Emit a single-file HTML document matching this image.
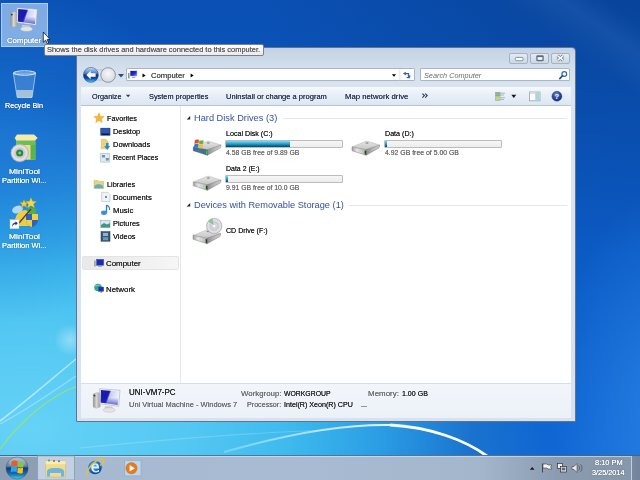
<!DOCTYPE html>
<html><head><meta charset="utf-8">
<style>
*{margin:0;padding:0;box-sizing:border-box}
html,body{width:640px;height:480px;overflow:hidden}
body{position:relative;font-family:"Liberation Sans",sans-serif;background:#0b4aa6}
.a{position:absolute}
.t{position:absolute;white-space:nowrap;line-height:1;transform-origin:0 0}
#desk{left:0;top:0;width:640px;height:480px;
 background:
  radial-gradient(ellipse 190px 170px at 0px 150px, rgba(30,124,214,0.75) 0%, rgba(30,124,214,0) 100%),
  radial-gradient(ellipse 120px 230px at 670px 420px, rgba(50,140,235,0.7) 0%, rgba(50,140,235,0) 100%),
  linear-gradient(215deg, rgba(255,255,255,0) 0px, rgba(255,255,255,0) 20px, rgba(140,190,255,0.09) 45px, rgba(255,255,255,0) 80px),
  radial-gradient(ellipse 520px 330px at 30px 430px, #66d2f6 0%, #54c8f3 30%, #3ebaee 50%, #2a9ce4 68%, #1a72ce 85%, rgba(21,101,200,0) 100%),
  radial-gradient(ellipse 380px 260px at 640px 0px, rgba(0,16,50,0.2) 0%, rgba(0,16,50,0) 100%),
  linear-gradient(to bottom, #0a50b4 0%, #0b5ac4 50%, #1068d6 100%);}
.bar{position:absolute;height:8px;width:118px;border:1px solid #bcbcbc;border-radius:1px;background:linear-gradient(#f6f6f6,#ececec)}
.fill{position:absolute;left:0;top:0;bottom:0;background:linear-gradient(#8ad8ee,#2ab4de 35%,#1a98c4 55%,#0c6288 80%,#0a4c6c)}
</style></head><body>
<div id="desk" class="a"></div>
<svg class="a" style="left:0;top:0" width="640" height="480">
 <defs><filter id="bl" x="-10%" y="-10%" width="120%" height="120%"><feGaussianBlur stdDeviation="0.5"/></filter>
 <linearGradient id="swg" gradientUnits="userSpaceOnUse" x1="224" y1="0" x2="400" y2="0"><stop offset="0" stop-color="#fff" stop-opacity="0.25"/><stop offset="1" stop-color="#fff" stop-opacity="0.95"/></linearGradient>
 <radialGradient id="glow"><stop offset="0" stop-color="#fff" stop-opacity="0.35"/><stop offset="1" stop-color="#fff" stop-opacity="0"/></radialGradient></defs>
 <circle cx="70" cy="340" r="16" fill="url(#glow)"/>
 <g filter="url(#bl)">
 <path d="M0 421 C 30 398, 55 376, 76 359" stroke="rgba(255,255,255,0.5)" stroke-width="1.6" fill="none"/>
 <path d="M0 424 C 30 408, 55 390, 76 376" stroke="rgba(255,255,255,0.32)" stroke-width="1.2" fill="none"/>
 <path d="M0 449 C 20 422, 48 397, 76 386.5" stroke="rgba(150,230,110,0.95)" stroke-width="1.2" fill="none"/>
 <path d="M224 452 C 280 436, 340 424, 390 425 C 430 427, 465 440, 487 456" stroke="url(#swg)" stroke-width="2" fill="none"/>
 <path d="M80 448 C 180 438, 270 432, 330 430" stroke="rgba(255,255,255,0.18)" stroke-width="1.2" fill="none"/>
 <path d="M390 425 C 430 427, 465 440, 487 456" stroke="rgba(255,255,255,0.85)" stroke-width="2.8" fill="none"/>
 </g>
</svg>

<!-- desktop selection -->
<div class="a" style="left:1px;top:3px;width:47px;height:43.5px;background:rgba(182,212,248,0.68);border:1px solid rgba(210,228,252,0.6)"></div>

<!-- window -->
<div class="a" style="left:76px;top:47px;width:500px;height:375px;border:1px solid #62738a;border-radius:4px 4px 0 0;background:linear-gradient(#c3d2e3 0px,#d3dfec 20px,#d9e4f0 40px,#d6e2ef 100%)"></div>
<div class="a" style="left:509px;top:52.5px;width:19px;height:11px;border:1px solid #a4b2c4;border-radius:2px;background:linear-gradient(#e4ebf3,#ccd8e6)"></div>
<div class="a" style="left:530px;top:52.5px;width:19px;height:11px;border:1px solid #a4b2c4;border-radius:2px;background:linear-gradient(#e4ebf3,#ccd8e6)"></div>
<div class="a" style="left:551px;top:52.5px;width:19px;height:11px;border:1px solid #a4b2c4;border-radius:2px;background:linear-gradient(#e4ebf3,#ccd8e6)"></div>
<div class="a" style="left:126px;top:68px;width:289px;height:13px;background:#fff;border:1px solid #a9b6c6;border-radius:1px"></div>
<div class="a" style="left:420px;top:68px;width:150px;height:13px;background:#fff;border:1px solid #a9b6c6;border-radius:1px"></div>
<div class="a" style="left:81px;top:87px;width:490px;height:19px;background:linear-gradient(#f6f9fc,#e7eef7 50%,#dce6f3);border-bottom:1px solid #b8c5d4"></div>
<div class="a" style="left:81px;top:106px;width:490px;height:277px;background:#fff"></div>
<div class="a" style="left:180px;top:106px;width:1px;height:277px;background:#e3e8ee"></div>
<div class="a" style="left:82px;top:256px;width:97px;height:13.5px;border:1px solid #e4e4e4;border-radius:2px;background:linear-gradient(to right,#e9e9e9,#f0f0f0 60%,#f6f6f6)"></div>
<div class="a" style="left:283px;top:118px;width:284px;height:1px;background:#e2e7ee"></div>
<div class="a" style="left:349px;top:205px;width:218px;height:1px;background:#e2e7ee"></div>
<div class="bar" style="left:225px;top:139.5px"><div class="fill" style="width:64px"></div></div>
<div class="bar" style="left:384px;top:139.5px"><div class="fill" style="width:2px"></div></div>
<div class="bar" style="left:225px;top:174.5px"><div class="fill" style="width:2px"></div></div>
<div class="a" style="left:81px;top:383px;width:490px;height:35px;background:linear-gradient(#f2f6fb,#ecf1f8);border-top:1px solid #d5dee9"></div>

<!-- taskbar -->
<div class="a" style="left:0;top:455px;width:640px;height:25px;background:linear-gradient(to right,#8e9fb4 0,#8e9fb4 37px,#a6b9d0 37px,#a8bbd2 300px,#a4b6cc 480px,#8a9bb0 560px,#8697ac 640px);border-top:1px solid rgba(20,60,90,0.55)"></div>
<div class="a" style="left:0;top:456px;width:640px;height:1px;background:rgba(230,238,248,0.55)"></div>
<div class="a" style="left:631px;top:456px;width:9px;height:24px;background:linear-gradient(to right,#c4cfdb 0,#c4cfdb 1px,#7888a0 1px,#73839a)"></div>

<div class="t" style="left:7.26px;top:37.08px;font-size:7.9px;color:#fff;transform:scaleX(0.9849);text-shadow:0 0 0.4px #fff,0 0 1.5px rgba(0,0,0,.45)">Computer</div>
<div class="t" style="left:5.40px;top:102.19px;font-size:7.9px;color:#fff;transform:scaleX(0.9110);text-shadow:0 0 0.4px #fff,0 0 1.5px rgba(0,0,0,.45)">Recycle Bin</div>
<div class="t" style="left:9.16px;top:167.59px;font-size:7.9px;color:#fff;transform:scaleX(1.0712);text-shadow:0 0 0.4px #fff,0 0 1.5px rgba(0,0,0,.45)">MiniTool</div>
<div class="t" style="left:1.98px;top:176.69px;font-size:7.9px;color:#fff;transform:scaleX(0.9462);text-shadow:0 0 0.4px #fff,0 0 1.5px rgba(0,0,0,.45)">Partition Wi...</div>
<div class="t" style="left:9.16px;top:232.59px;font-size:7.9px;color:#fff;transform:scaleX(1.0712);text-shadow:0 0 0.4px #fff,0 0 1.5px rgba(0,0,0,.45)">MiniTool</div>
<div class="t" style="left:1.98px;top:241.69px;font-size:7.9px;color:#fff;transform:scaleX(0.9462);text-shadow:0 0 0.4px #fff,0 0 1.5px rgba(0,0,0,.45)">Partition Wi...</div>
<div class="t" style="left:150.56px;top:71.53px;font-size:7.5px;color:#4a4a4a;transform:scaleX(1.0269);text-shadow:0 0 0.15px #4a4a4a">Computer</div>
<div class="t" style="left:424.49px;top:71.53px;font-size:7.5px;color:#6d6d6d;transform:scaleX(0.9744);font-style:italic">Search Computer</div>
<div class="t" style="left:92.29px;top:93.03px;font-size:7.5px;color:#2a3a52;transform:scaleX(0.9683);text-shadow:0 0 0.15px #2a3a52">Organize</div>
<div class="t" style="left:148.98px;top:93.03px;font-size:7.5px;color:#2a3a52;transform:scaleX(0.9823);text-shadow:0 0 0.15px #2a3a52">System properties</div>
<div class="t" style="left:226.47px;top:93.03px;font-size:7.5px;color:#2a3a52;transform:scaleX(1.0042);text-shadow:0 0 0.15px #2a3a52">Uninstall or change a program</div>
<div class="t" style="left:345.06px;top:93.03px;font-size:7.5px;color:#2a3a52;transform:scaleX(1.0334);text-shadow:0 0 0.15px #2a3a52">Map network drive</div>
<div class="t" style="left:106.59px;top:115.21px;font-size:7.4px;color:#262626;transform:scaleX(0.9875);text-shadow:0 0 0.15px #262626">Favorites</div>
<div class="t" style="left:113.23px;top:128.31px;font-size:7.4px;color:#262626;transform:scaleX(1.0005);text-shadow:0 0 0.15px #262626">Desktop</div>
<div class="t" style="left:113.22px;top:141.46px;font-size:7.4px;color:#262626;transform:scaleX(1.0157);text-shadow:0 0 0.15px #262626">Downloads</div>
<div class="t" style="left:113.26px;top:154.31px;font-size:7.4px;color:#262626;transform:scaleX(0.9483);text-shadow:0 0 0.15px #262626">Recent Places</div>
<div class="t" style="left:106.58px;top:181.01px;font-size:7.4px;color:#262626;transform:scaleX(0.9943);text-shadow:0 0 0.15px #262626">Libraries</div>
<div class="t" style="left:112.96px;top:193.71px;font-size:7.4px;color:#262626;transform:scaleX(1.0355);text-shadow:0 0 0.15px #262626">Documents</div>
<div class="t" style="left:112.95px;top:206.81px;font-size:7.4px;color:#262626;transform:scaleX(1.0584);text-shadow:0 0 0.15px #262626">Music</div>
<div class="t" style="left:112.98px;top:220.01px;font-size:7.4px;color:#262626;transform:scaleX(0.9994);text-shadow:0 0 0.15px #262626">Pictures</div>
<div class="t" style="left:112.98px;top:233.01px;font-size:7.4px;color:#262626;transform:scaleX(1.0055);text-shadow:0 0 0.15px #262626">Videos</div>
<div class="t" style="left:106.45px;top:259.61px;font-size:7.4px;color:#262626;transform:scaleX(1.0708);text-shadow:0 0 0.15px #262626">Computer</div>
<div class="t" style="left:106.44px;top:285.51px;font-size:7.4px;color:#262626;transform:scaleX(1.0716);text-shadow:0 0 0.15px #262626">Network</div>
<div class="t" style="left:194.25px;top:113.69px;font-size:9.3px;color:#3350a0;transform:scaleX(0.9943);text-shadow:none">Hard Disk Drives (3)</div>
<div class="t" style="left:194.35px;top:200.90px;font-size:9.3px;color:#3350a0;transform:scaleX(0.9932);text-shadow:none">Devices with Removable Storage (1)</div>
<div class="t" style="left:225.60px;top:130.31px;font-size:7.4px;color:#262626;transform:scaleX(0.9647);text-shadow:0 0 0.15px #262626">Local Disk (C:)</div>
<div class="t" style="left:225.52px;top:149.46px;font-size:7.4px;color:#6d6d6d;transform:scaleX(0.9246);text-shadow:0 0 0.15px #6d6d6d">4.58 GB free of 9.89 GB</div>
<div class="t" style="left:384.50px;top:130.31px;font-size:7.4px;color:#262626;transform:scaleX(0.9658);text-shadow:0 0 0.15px #262626">Data (D:)</div>
<div class="t" style="left:384.52px;top:149.46px;font-size:7.4px;color:#6d6d6d;transform:scaleX(0.9323);text-shadow:0 0 0.15px #6d6d6d">4.92 GB free of 5.00 GB</div>
<div class="t" style="left:225.61px;top:165.46px;font-size:7.4px;color:#262626;transform:scaleX(0.9413);text-shadow:0 0 0.15px #262626">Data 2 (E:)</div>
<div class="t" style="left:225.52px;top:184.46px;font-size:7.4px;color:#6d6d6d;transform:scaleX(0.9246);text-shadow:0 0 0.15px #6d6d6d">9.91 GB free of 10.0 GB</div>
<div class="t" style="left:225.75px;top:226.71px;font-size:7.4px;color:#262626;transform:scaleX(0.9556);text-shadow:0 0 0.15px #262626">CD Drive (F:)</div>
<div class="t" style="left:129.19px;top:388.93px;font-size:8.2px;color:#262626;transform:scaleX(0.9758);text-shadow:0 0 0.15px #262626">UNI-VM7-PC</div>
<div class="t" style="left:129.22px;top:400.81px;font-size:7.4px;color:#6d6d6d;transform:scaleX(1.0139);text-shadow:0 0 0.15px #6d6d6d">Uni Virtual Machine - Windows 7</div>
<div class="t" style="left:240.75px;top:389.61px;font-size:7.4px;color:#6d6d6d;transform:scaleX(1.0648);text-shadow:0 0 0.15px #6d6d6d">Workgroup:</div>
<div class="t" style="left:283.52px;top:389.61px;font-size:7.4px;color:#262626;transform:scaleX(0.9288);text-shadow:0 0 0.15px #262626">WORKGROUP</div>
<div class="t" style="left:246.70px;top:400.81px;font-size:7.4px;color:#6d6d6d;transform:scaleX(0.9669);text-shadow:0 0 0.15px #6d6d6d">Processor:</div>
<div class="t" style="left:283.50px;top:400.81px;font-size:7.4px;color:#262626;transform:scaleX(0.9634);text-shadow:0 0 0.15px #262626">Intel(R) Xeon(R) CPU</div>
<div class="t" style="left:360.51px;top:400.81px;font-size:7.4px;color:#262626;transform:scaleX(0.9463);text-shadow:0 0 0.15px #262626">...</div>
<div class="t" style="left:368.44px;top:389.61px;font-size:7.4px;color:#6d6d6d;transform:scaleX(1.0767);text-shadow:0 0 0.15px #6d6d6d">Memory:</div>
<div class="t" style="left:401.51px;top:389.61px;font-size:7.4px;color:#262626;transform:scaleX(0.9529);text-shadow:0 0 0.15px #262626">1.00 GB</div>
<div class="t" style="left:594.68px;top:459.14px;font-size:7.6px;color:#fff;transform:scaleX(0.9792);text-shadow:0 0 0.4px #fff,0 0 1.5px rgba(0,0,0,.5)">8:10 PM</div>
<div class="t" style="left:592.29px;top:469.44px;font-size:7.6px;color:#fff;transform:scaleX(0.9609);text-shadow:0 0 0.4px #fff,0 0 1.5px rgba(0,0,0,.5)">3/25/2014</div>


<svg class="a" style="left:0;top:0;z-index:5" width="640" height="480" viewBox="0 0 640 480">
<defs>
 <linearGradient id="scr" x1="0" y1="0" x2="1" y2="0.3">
  <stop offset="0" stop-color="#2020a8"/><stop offset="0.45" stop-color="#1818b0"/><stop offset="0.5" stop-color="#3a40c8"/><stop offset="0.56" stop-color="#c8cef4"/><stop offset="1" stop-color="#eef0fb"/>
 </linearGradient>
 <linearGradient id="scrb" x1="0" y1="0" x2="0" y2="1">
  <stop offset="0.5" stop-color="#3038c0" stop-opacity="0"/><stop offset="1" stop-color="#2028b8" stop-opacity="0.7"/>
 </linearGradient>
 <linearGradient id="tower" x1="0" y1="0" x2="1" y2="0">
  <stop offset="0" stop-color="#8a8a8a"/><stop offset="0.45" stop-color="#d8d8d8"/><stop offset="1" stop-color="#9a9a9a"/>
 </linearGradient>
 
 <radialGradient id="cd" cx="0.5" cy="0.5" r="0.5">
  <stop offset="0" stop-color="#f0f0f0"/><stop offset="0.5" stop-color="#c8c8d0"/><stop offset="0.8" stop-color="#e8e4ec"/><stop offset="1" stop-color="#b8b8c0"/>
 </radialGradient>
 <linearGradient id="back" x1="0" y1="0" x2="0" y2="1">
  <stop offset="0" stop-color="#c4dcf8"/><stop offset="0.4" stop-color="#4a7ccc"/><stop offset="0.5" stop-color="#0c3488"/><stop offset="0.72" stop-color="#0a4aa8"/><stop offset="1" stop-color="#5cc8f8"/>
 </linearGradient>
 <radialGradient id="fwd" cx="0.5" cy="0.4" r="0.6">
  <stop offset="0" stop-color="#f6f7f9"/><stop offset="1" stop-color="#d4d9e0"/>
 </radialGradient>
 <radialGradient id="help" cx="0.45" cy="0.35" r="0.6">
  <stop offset="0" stop-color="#7a9ce4"/><stop offset="0.6" stop-color="#2a48a8"/><stop offset="1" stop-color="#142c80"/>
 </radialGradient>
 <linearGradient id="drvtop" x1="0" y1="0" x2="0" y2="1">
  <stop offset="0" stop-color="#e6e6e6"/><stop offset="1" stop-color="#c4c4c4"/>
 </linearGradient>
 <linearGradient id="drvfront" x1="0" y1="0" x2="1" y2="0">
  <stop offset="0" stop-color="#a0a0a0"/><stop offset="0.35" stop-color="#e4e4e6"/><stop offset="1" stop-color="#b4b4b4"/>
 </linearGradient>
 <linearGradient id="drvright" x1="0" y1="0" x2="1" y2="0">
  <stop offset="0" stop-color="#8a8a8a"/><stop offset="0.5" stop-color="#b8b8b8"/><stop offset="1" stop-color="#d0d0d0"/>
 </linearGradient>
 
 <radialGradient id="orb" cx="0.5" cy="0.6" r="0.6">
  <stop offset="0" stop-color="#60c8f0"/><stop offset="0.45" stop-color="#2a80c0"/><stop offset="0.8" stop-color="#14508a"/><stop offset="1" stop-color="#2a4a68"/>
 </radialGradient>
<linearGradient id="orb2" x1="0" y1="0" x2="0" y2="1">
  <stop offset="0" stop-color="#9fb4c8"/><stop offset="0.42" stop-color="#5f86aa"/><stop offset="0.5" stop-color="#0c3c7c"/><stop offset="0.78" stop-color="#1670b8"/><stop offset="1" stop-color="#3ed0f4"/>
 </linearGradient>
<linearGradient id="scr2" x1="0" y1="0" x2="1" y2="1"><stop offset="0" stop-color="#1010a0"/><stop offset="0.55" stop-color="#2030d0"/><stop offset="1" stop-color="#8090f0"/></linearGradient>
<radialGradient id="ieg" cx="0.4" cy="0.35" r="0.7"><stop offset="0" stop-color="#60b8f0"/><stop offset="0.6" stop-color="#1a6ac8"/><stop offset="1" stop-color="#0a3a90"/></radialGradient>
</defs>

<!-- desktop icons -->
<g>
  <path d="M10.5,13 L14.5,11.5 L17.5,12.3 L17.5,26 L13.5,27.2 L10.5,26 Z" fill="url(#tower)" stroke="#a8a498" stroke-width="0.4"/>
  <circle cx="11.8" cy="14.6" r="0.9" fill="#303030"/>
  <path d="M22,25 L30,25.5 L30,28 L22,27.5 Z" fill="#cfcfcf"/>
  <ellipse cx="26.5" cy="29" rx="6" ry="2.3" fill="#e4e4e4" stroke="#b4b4b4" stroke-width="0.4"/>
  <path d="M17,7.7 L37.3,9.3 L36,25.3 L16.7,22.7 Z" fill="#eef2f6" stroke="#9aa2aa" stroke-width="0.5"/>
  <path d="M18.2,9 L36,10.6 L34.9,24 L17.9,21.6 Z" fill="url(#scr)"/>
  <path d="M18.2,9 L36,10.6 L34.9,24 L17.9,21.6 Z" fill="url(#scrb)"/>
 </g>
<!-- recycle bin -->
<path d="M13.3,73 L35.6,73 L32,97.5 L17.2,97.5 Z" fill="rgba(190,225,255,0.22)" stroke="rgba(225,240,255,0.75)" stroke-width="0.8"/>
<path d="M16.4,90 L32.9,90 L32,97.5 L17.2,97.5 Z" fill="rgba(235,235,220,0.6)"/>
<ellipse cx="24.5" cy="73" rx="11.1" ry="2.2" fill="rgba(255,255,255,0.12)" stroke="rgba(240,250,255,0.9)" stroke-width="1"/>
<!-- minitool 1 -->
<path d="M16.1,140.3 L35.3,140.3 L35.3,159.7 L16.1,159.7 Z" fill="#e8de98"/>
<rect x="16.1" y="141" width="19.2" height="4" fill="#6cc04c"/>
<rect x="30.5" y="145" width="4.8" height="14.7" fill="#5cb444"/>
<path d="M14.7,138 L17,134.6 L34,134.6 L37.7,138 L35.3,140.3 L16.1,140.3 Z" fill="#f4eca8"/>
<circle cx="19.7" cy="153" r="8.9" fill="url(#cd)" stroke="#a8a8b0" stroke-width="0.4"/>
<circle cx="19.7" cy="153" r="3.6" fill="#2a8a3a"/>
<circle cx="19.7" cy="153" r="1.4" fill="#88cc88"/>
<!-- minitool 2 -->
<ellipse cx="17.5" cy="209.5" rx="5.5" ry="3.8" fill="rgba(205,228,255,0.85)" transform="rotate(-20 17.5 209.5)"/>
<path d="M15,222 C15,214 20,210 26,210 L31,214 L30,226 L18,226 Z" fill="#e8cf4a"/>
<path d="M28,207 L36,209 L35,216 L29,216 Z" fill="#52b040"/>
<path d="M26,214 L38,214 L38,220 C38,224 34,227 32,227 C30,227 26,224 26,220 Z" fill="#2f62c0"/>
<path d="M32,214 L38,214 L38,220 L32,220 Z M26,220 L32,220 L32,227 C30,227 26,224 26,220 Z" fill="#f0d040"/>
<path d="M24,199.5 L25.2,202.5 L28.3,202.6 L25.9,204.5 L26.8,207.5 L24,205.8 L21.2,207.5 L22.1,204.5 L19.7,202.6 L22.8,202.5 Z" fill="#f2d030" stroke="#b09020" stroke-width="0.3"/>
<path d="M31,197.5 L32.6,201.3 L36.6,201.5 L33.5,204 L34.6,207.9 L31,205.7 L27.4,207.9 L28.5,204 L25.4,201.5 L29.4,201.3 Z" fill="#f4d840" stroke="#b09020" stroke-width="0.3"/>
<path d="M19,223 L31,209" stroke="#5a3a20" stroke-width="1.3"/>
<rect x="10" y="219.7" width="9" height="9" fill="#fff" stroke="#c8c8c8" stroke-width="0.4"/>
<path d="M12,227 C12,224 13.5,222.5 15.5,222.5 L15.5,221.2 L17.8,223.3 L15.5,225.4 L15.5,224.1 C14.2,224.1 13.2,225 12,227 Z" fill="#1a3a8a"/>

<!-- window: nav buttons -->
<rect x="92" y="70" width="17" height="10" fill="#dde2e8" stroke="#a4aab2" stroke-width="0.6"/>
<circle cx="90.9" cy="74.9" r="7.5" fill="url(#back)" stroke="#27467a" stroke-width="0.5"/>
<path d="M86.3,75 L90.6,70.8 L90.6,73.3 L95.6,73.3 L95.6,76.7 L90.6,76.7 L90.6,79.2 Z" fill="#fff"/>
<circle cx="108.1" cy="75" r="7.3" fill="url(#fwd)" stroke="#7e848c" stroke-width="0.8"/>
<path d="M118,74 L124,74 L121,77.5 Z" fill="#1e4f8f"/>
<!-- address bar contents -->
<rect x="128" y="73" width="1.6" height="5.5" fill="#8a9a8a"/>
<rect x="129.8" y="70.3" width="7.6" height="6.2" fill="#d4dbe2"/>
<rect x="130.4" y="71" width="6.4" height="4.9" fill="url(#scr2)"/>
<rect x="132" y="76.8" width="3.4" height="1.2" fill="#a8b0b0"/>
<path d="M142.5,73.5 L145.6,75.5 L142.5,77.6 Z" fill="#000"/>
<path d="M190.6,73.5 L193.7,75.5 L190.6,77.6 Z" fill="#000"/>
<path d="M391.9,74.3 L396.1,74.3 L394,76.8 Z" fill="#000"/>
<rect x="399.5" y="69" width="0.8" height="11.5" fill="#d4dbe4"/>
<path d="M405.5,73.6 L408.6,73.6 L408.6,76.2" stroke="#2a62b0" stroke-width="1.1" fill="none"/>
<path d="M403,73.6 L405.8,71.8 L405.8,75.4 Z" fill="#2a62b0"/>
<path d="M406.6,77.6 L409.6,77.6" stroke="#2a62b0" stroke-width="1.1" fill="none"/>
<path d="M407.6,75.6 L410.8,75.6 L409.2,78.8 Z" fill="#2a62b0"/>
<!-- search magnifier -->
<circle cx="564.3" cy="74" r="2.4" fill="none" stroke="#2a6cb8" stroke-width="1.2"/>
<path d="M562.5,75.8 L559.8,78.6" stroke="#1a4888" stroke-width="1.6" stroke-linecap="round"/>
<!-- caption glyphs -->
<rect x="515.4" y="57.4" width="7.6" height="3.3" rx="1" fill="#fff" stroke="#5e6c7c" stroke-width="0.7"/>
<rect x="536.3" y="55.2" width="7.4" height="6" rx="1.2" fill="#5e6c7c"/>
<rect x="537.6" y="57.2" width="4.8" height="2.6" fill="#fff"/>
<path d="M557.5,55.6 L563.3,60.4 M563.3,55.6 L557.5,60.4" stroke="#5e6c7c" stroke-width="3"/>
<path d="M557.5,55.6 L563.3,60.4 M563.3,55.6 L557.5,60.4" stroke="#fff" stroke-width="1.5"/>
<!-- toolbar -->
<path d="M126,94.8 L130.2,94.8 L128.1,97.3 Z" fill="#1e395b"/>
<rect x="495.6" y="92.3" width="4.6" height="3.6" fill="#8cb88c" stroke="#7a8a9a" stroke-width="0.4"/>
<rect x="495.6" y="96.8" width="4.6" height="3.6" fill="#c4d470" stroke="#7a8a9a" stroke-width="0.4"/>
<path d="M501,93.2 L505,93.2 M501,95 L504,95 M501,97.7 L505,97.7 M501,99.5 L504,99.5" stroke="#98a8bc" stroke-width="0.8"/>
<path d="M511.3,94.8 L516.3,94.8 L513.8,97.9 Z" fill="#1a1a1a"/>
<rect x="529.4" y="92" width="10.6" height="8.8" fill="#fdfdfd" stroke="#8a98a8" stroke-width="0.7"/>
<rect x="535.2" y="92.4" width="4.4" height="8" fill="#a8d6dc"/>
<rect x="529.8" y="92.4" width="5.4" height="1.6" fill="#d8e0ea"/>
<circle cx="556.9" cy="96.3" r="5" fill="url(#help)" stroke="#30487a" stroke-width="0.4"/>
<text x="556.9" y="99.2" font-family="Liberation Sans" font-size="7.5" font-weight="bold" fill="#fff" text-anchor="middle">?</text>

<!-- nav pane icons -->
<path d="M99,112.8 L100.5,116.4 L104.2,116.6 L101.3,119 L102.3,122.6 L99,120.6 L95.7,122.6 L96.7,119 L93.8,116.6 L97.5,116.4 Z" fill="#f6b830" stroke="#e09010" stroke-width="0.4"/>
<rect x="100.8" y="128.2" width="9.2" height="7" fill="#2a58c0" stroke="#1a2a50" stroke-width="0.6"/>
<rect x="101.5" y="133.5" width="7.8" height="1.4" fill="#101830"/>
<path d="M101.3,139.5 L106,139.5 L107,141 L108,141 L108,148.8 L101.3,148.8 Z" fill="#ecd47a" stroke="#c0a040" stroke-width="0.4"/>
<path d="M106,143 L108.5,143 L108.5,146 L110.3,146 L107.2,150 L104.2,146 L106,146 Z" fill="#2a88d8"/>
<rect x="100.8" y="153.5" width="8.8" height="8.6" fill="#e4e8ee" stroke="#9aa4b0" stroke-width="0.5"/>
<rect x="102" y="155" width="3" height="2.5" fill="#5a9ad0"/><rect x="105.8" y="158" width="3" height="2.5" fill="#5a9ad0"/>
<path d="M94,180.4 L98,180.4 L99,181.5 L103.6,181.5 L103.6,188.5 L94,188.5 Z" fill="#e6d480" stroke="#b8a050" stroke-width="0.4"/>
<path d="M94.5,186 C96,183.5 101,183.5 103,186 L103,188.3 L94.5,188.3 Z" fill="#60b0c0"/>
<path d="M101.6,192.3 L107.8,192.3 L110,194.5 L110,201.5 L101.6,201.5 Z" fill="#f0f2f5" stroke="#a8b0bc" stroke-width="0.5"/>
<circle cx="106" cy="197" r="1" fill="#2a70c0"/>
<path d="M106.5,205 L106.5,212.5" stroke="#2a80c8" stroke-width="1.3"/>
<ellipse cx="104" cy="212.8" rx="3" ry="2.2" fill="#3a90d8"/>
<path d="M106.5,205 C108.5,206 110,207.5 109.5,210" stroke="#2a80c8" stroke-width="1.2" fill="none"/>
<rect x="100.5" y="220.2" width="9.5" height="7.5" fill="#d8e8ee" stroke="#8aa0b0" stroke-width="0.5"/>
<path d="M101,225 L104,223 L107,224.5 L110,223 L110,227.5 L101,227.5 Z" fill="#3a9a8a"/>
<rect x="101" y="231.7" width="9" height="9.5" fill="#3a5a78" stroke="#1a2a38" stroke-width="0.5"/>
<rect x="103" y="233" width="5" height="3" fill="#8ab8d8"/><rect x="103" y="237.2" width="5" height="3" fill="#6a98b8"/>
<!-- computer nav -->
<rect x="94" y="260.5" width="1.8" height="6" fill="#a0a8b0"/>
<rect x="96.5" y="259.3" width="7.2" height="6" fill="#1a2ac0" stroke="#4a5a78" stroke-width="0.5"/>
<rect x="98" y="265.5" width="4" height="1.2" fill="#8a96a4"/>
<!-- network -->
<circle cx="98" cy="287.5" r="3.8" fill="#30a898"/>
<path d="M95,286 C96.5,285 98.5,286 99.5,285" stroke="#c8f0e8" stroke-width="0.6" fill="none"/>
<rect x="98.7" y="287" width="5" height="4.4" fill="#1a30c0" stroke="#3a4a70" stroke-width="0.4"/>
<rect x="100.5" y="291.4" width="1.5" height="1.2" fill="#5a6a7a"/>

<path d="M422.4,93.6 L424.4,95.6 L422.4,97.6 M425.2,93.6 L427.2,95.6 L425.2,97.6" stroke="#2a3a52" stroke-width="1.1" fill="none"/>
<!-- group triangles -->
<path d="M186.7,119.4 L190.2,119.4 L190.2,115.9 Z" fill="#222"/>
<path d="M186.7,206.4 L190.2,206.4 L190.2,202.9 Z" fill="#222"/>

<!-- drives -->
<g transform="translate(193.3,141)">
  <path d="M0,5.9 L14.7,0 L27.8,4.1 L14,8.8 Z" fill="url(#drvtop)" stroke="#a4a4a4" stroke-width="0.4"/>
  <ellipse cx="15" cy="2" rx="1.6" ry="0.8" fill="#8a8a8a"/>
  <path d="M0,5.9 L14,8.8 L14,14.3 L0,9.7 Z" fill="url(#drvfront)" stroke="#7c7c7c" stroke-width="0.45"/>
  <path d="M14,8.8 L27.8,4.1 L27,6.9 L14,14.3 Z" fill="url(#drvright)" stroke="#747474" stroke-width="0.45"/>
  <path d="M12.6,9.5 L14.2,9.9 L14.2,13.8 L12.6,13.3 Z" fill="#1e4a1e"/>
 </g>
<path d="M193.3,146.9 L207.3,149.8 L207.3,155.3 L193.3,150.7 Z" fill="#1f5a84" opacity="0.8"/>
<path d="M205.9,150.5 L207.5,150.9 L207.5,154.8 L205.9,154.3 Z" fill="#50c050"/>
<path d="M194.8,140.2 C196.2,139.4 197.6,139.3 199,140 L198.6,143.6 C197.2,143 195.8,143.1 194.4,144 Z" fill="#e0502a"/>
<path d="M199.4,140.2 C200.8,140.8 202.2,140.6 203.6,139.9 L203.2,143.5 C201.8,144.2 200.4,144.3 199,143.8 Z" fill="#68b040"/>
<path d="M194.3,144.4 C195.7,143.6 197.1,143.5 198.5,144.2 L198.1,147.8 C196.7,147.2 195.3,147.3 193.9,148.2 Z" fill="#2a7ed0"/>
<path d="M198.9,144.4 C200.3,145 201.7,144.8 203.1,144.1 L202.7,147.7 C201.3,148.4 199.9,148.5 198.5,148 Z" fill="#f0c030"/>
<g transform="translate(352,141)">
  <path d="M0,5.9 L14.7,0 L27.8,4.1 L14,8.8 Z" fill="url(#drvtop)" stroke="#a4a4a4" stroke-width="0.4"/>
  <ellipse cx="15" cy="2" rx="1.6" ry="0.8" fill="#8a8a8a"/>
  <path d="M0,5.9 L14,8.8 L14,14.3 L0,9.7 Z" fill="url(#drvfront)" stroke="#7c7c7c" stroke-width="0.45"/>
  <path d="M14,8.8 L27.8,4.1 L27,6.9 L14,14.3 Z" fill="url(#drvright)" stroke="#747474" stroke-width="0.45"/>
  <path d="M12.6,9.5 L14.2,9.9 L14.2,13.8 L12.6,13.3 Z" fill="#1e4a1e"/>
 </g>
<g transform="translate(193.3,176)">
  <path d="M0,5.9 L14.7,0 L27.8,4.1 L14,8.8 Z" fill="url(#drvtop)" stroke="#a4a4a4" stroke-width="0.4"/>
  <ellipse cx="15" cy="2" rx="1.6" ry="0.8" fill="#8a8a8a"/>
  <path d="M0,5.9 L14,8.8 L14,14.3 L0,9.7 Z" fill="url(#drvfront)" stroke="#7c7c7c" stroke-width="0.45"/>
  <path d="M14,8.8 L27.8,4.1 L27,6.9 L14,14.3 Z" fill="url(#drvright)" stroke="#747474" stroke-width="0.45"/>
  <path d="M12.6,9.5 L14.2,9.9 L14.2,13.8 L12.6,13.3 Z" fill="#1e4a1e"/>
 </g>
<!-- CD drive -->
<g transform="translate(193,229.5)">
  <path d="M0,5.9 L14.7,0 L27.8,4.1 L14,8.8 Z" fill="url(#drvtop)" stroke="#a4a4a4" stroke-width="0.4"/>
  <ellipse cx="15" cy="2" rx="1.6" ry="0.8" fill="#8a8a8a"/>
  <path d="M0,5.9 L14,8.8 L14,14.3 L0,9.7 Z" fill="url(#drvfront)" stroke="#7c7c7c" stroke-width="0.45"/>
  <path d="M14,8.8 L27.8,4.1 L27,6.9 L14,14.3 Z" fill="url(#drvright)" stroke="#747474" stroke-width="0.45"/>
  <path d="M12.6,9.5 L14.2,9.9 L14.2,13.8 L12.6,13.3 Z" fill="#1e4a1e"/>
 </g>
<circle cx="214.2" cy="226" r="7.8" fill="url(#cd)" stroke="#a0a0a8" stroke-width="0.4"/>
<path d="M208.5,222 C209.5,220 211,219 212.5,218.6 L213.5,224.5 Z" fill="#60c080" opacity="0.7"/>
<circle cx="214.2" cy="226" r="1.6" fill="#fff" stroke="#b0b0b8" stroke-width="0.4"/>
<!-- details computer -->
<g transform="translate(82.7,381)">
  <path d="M10.5,13 L14.5,11.5 L17.5,12.3 L17.5,26 L13.5,27.2 L10.5,26 Z" fill="url(#tower)" stroke="#a8a498" stroke-width="0.4"/>
  <circle cx="11.8" cy="14.6" r="0.9" fill="#303030"/>
  <path d="M22,25 L30,25.5 L30,28 L22,27.5 Z" fill="#cfcfcf"/>
  <ellipse cx="26.5" cy="29" rx="6" ry="2.3" fill="#e4e4e4" stroke="#b4b4b4" stroke-width="0.4"/>
  <path d="M17,7.7 L37.3,9.3 L36,25.3 L16.7,22.7 Z" fill="#eef2f6" stroke="#9aa2aa" stroke-width="0.5"/>
  <path d="M18.2,9 L36,10.6 L34.9,24 L17.9,21.6 Z" fill="url(#scr)"/>
  <path d="M18.2,9 L36,10.6 L34.9,24 L17.9,21.6 Z" fill="url(#scrb)"/>
 </g>

<!-- taskbar icons -->
<circle cx="17.1" cy="468" r="11" fill="url(#orb2)" stroke="rgba(50,70,95,0.7)" stroke-width="0.6"/>
<ellipse cx="17.1" cy="462.5" rx="8.5" ry="5" fill="rgba(255,255,255,0.18)"/>
<path d="M11.6,461.2 C13.5,460.2 15.6,460.3 17.6,461.3 L17.2,466.4 C15.2,465.5 13.2,465.4 11.2,466.4 Z" fill="#f05a22"/>
<path d="M18.2,461.6 C20,462.4 21.8,462.4 23.6,461.6 L23.2,467 C21.4,467.9 19.6,467.8 17.8,466.8 Z" fill="#8cc63e"/>
<path d="M11.1,467.1 C13,466.1 15.1,466.2 17.1,467.2 L16.7,472.3 C14.7,471.4 12.7,471.3 10.7,472.3 Z" fill="#2aa6e8"/>
<path d="M17.7,467.6 C19.5,468.4 21.3,468.4 23.1,467.6 L22.7,473 C20.9,473.9 19.1,473.8 17.3,472.8 Z" fill="#fcc20e"/>
<rect x="37.5" y="456" width="37" height="24" fill="rgba(230,238,246,0.45)" stroke="#8898ac" stroke-width="0.8"/>
<path d="M45.6,461 L65.6,461 L65.6,477 L45.6,477 Z" fill="#f2dc8a" stroke="#c8a850" stroke-width="0.4"/>
<rect x="45.6" y="461" width="20" height="3.2" fill="#f8ecb8"/>
<circle cx="49" cy="460.5" r="1" fill="#40b040"/><circle cx="54" cy="461" r="1" fill="#d05030"/><circle cx="59" cy="461.3" r="1" fill="#3080d0"/>
<path d="M47,471 C48,468.5 51,468 55.6,468 C60,468 63,468.5 64.2,471 L64.2,476.5 L61,476.5 L61,473 L50,473 L50,476.5 L47,476.5 Z" fill="#70b4e0"/>
<!-- IE -->
<circle cx="95" cy="467.5" r="6.8" fill="url(#ieg)"/>
<path d="M91.2,467.2 C91.2,464.8 93,463.3 95.2,463.3 C97.5,463.3 99,464.9 99,467.2 L99,468.4 L93.4,468.4 C93.6,470 94.6,470.9 96,470.9 C97,470.9 97.7,470.5 98.2,469.9 L99,469.9 L99,471.8 C98.2,472.2 97,472.4 95.6,472.4 C93,472.4 91.2,470.3 91.2,467.2 Z M93.4,466.5 L96.8,466.5 C96.7,465.3 96.1,464.8 95.1,464.8 C94.1,464.8 93.5,465.4 93.4,466.5 Z" fill="#d8f0fc"/>
<path d="M87.5,476.5 C85,473.5 89.5,465 96.5,460.8 C101,458.2 104.5,458.2 104,460.8 C103.6,462.5 101.5,464.5 100,465.5" stroke="#e8c038" stroke-width="1.5" fill="none"/>
<!-- WMP -->
<rect x="124.8" y="460.3" width="16.2" height="15.6" fill="rgba(200,225,245,0.7)" stroke="#88a8c8" stroke-width="0.6"/>
<circle cx="131.5" cy="468.2" r="5.6" fill="#ea7a1c" stroke="#c85a10" stroke-width="0.4"/>
<path d="M129.6,465 L134.8,468.2 L129.6,471.4 Z" fill="#fff"/>
<!-- tray -->
<path d="M529.8,469.7 L534.6,469.7 L532.2,466.9 Z" fill="#1a1a1a"/>
<path d="M542.5,463.5 L542.5,472.5" stroke="#3a3a3a" stroke-width="0.9"/>
<path d="M543,464 L547,464 L548,465 L552,465 L550.5,467 L552,469 L548,469 L547,468 L543,468 Z" fill="#f8f8f8" stroke="#404040" stroke-width="0.6"/>
<rect x="557.5" y="463.5" width="5" height="5" fill="#f0f0f0" stroke="#303030" stroke-width="0.7"/>
<rect x="560.5" y="466.5" width="6" height="5.5" fill="#e8e8e8" stroke="#303030" stroke-width="0.7"/>
<rect x="561.7" y="467.6" width="3.6" height="2.8" fill="#5a6a80"/>
<path d="M572,466.5 L574,466.5 L577,463.5 L577,472.5 L574,469.5 L572,469.5 Z" fill="#e8e8e8" stroke="#404040" stroke-width="0.6"/>
<path d="M578.5,465.5 C580,467 580,469 578.5,470.5 M580.5,464.3 C582.5,466.5 582.5,469.5 580.5,471.7" stroke="#404040" stroke-width="0.6" fill="none"/>
</svg>


<!-- tooltip -->
<div class="a" style="z-index:10;left:43.5px;top:43.5px;width:220.5px;height:12.3px;background:linear-gradient(#ffffff,#e8e9f2);border:1px solid #808080;border-radius:2px"></div>
<div class="t" style="z-index:10;left:46.78px;top:45.95px;font-size:7.7px;color:#5c5c5c;transform:scaleX(0.9701);text-shadow:0 0 0.25px #5c5c5c">Shows the disk drives and hardware connected to this computer.</div>
<svg class="a" style="left:0;top:0;z-index:11" width="60" height="50"><path d="M43.3,32 L43.3,42.3 L45.6,40.1 L47.2,43.6 L48.6,43 L47.1,39.6 L50,39.5 Z" fill="#fff" stroke="#000" stroke-width="0.7" stroke-linejoin="round"/></svg>
</body></html>
